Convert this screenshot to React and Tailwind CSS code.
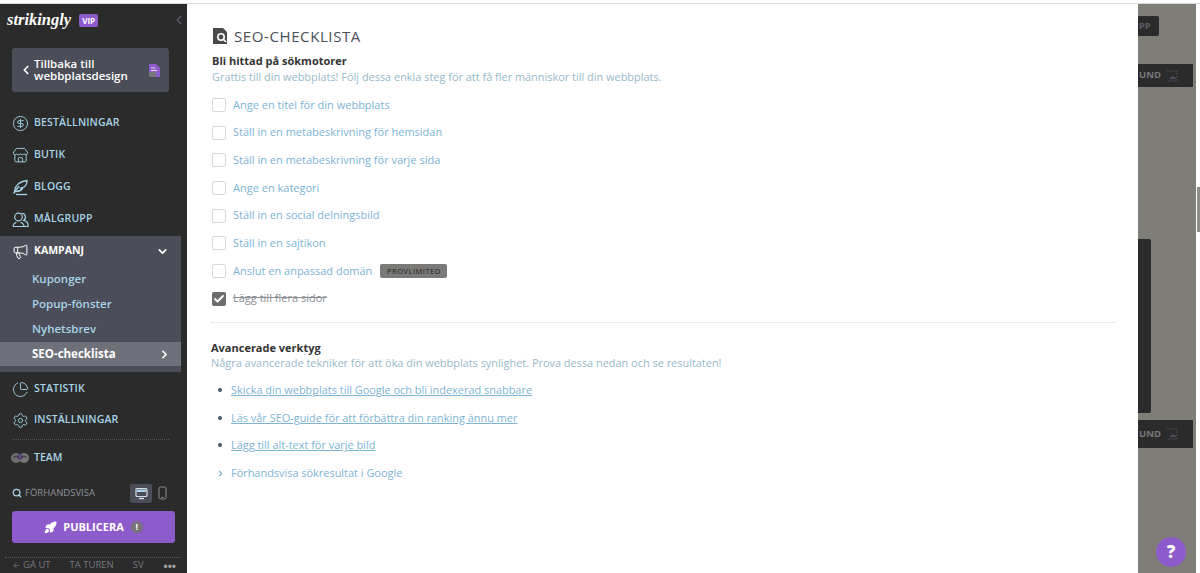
import { ChevronLeft, ChevronDown, ChevronRight, CircleDollarSign, Store, Megaphone, ChartPie, Settings, Search, Rocket, ArrowLeft, Check } from 'lucide-react';

const checks = [
  'Ange en titel för din webbplats',
  'Ställ in en metabeskrivning för hemsidan',
  'Ställ in en metabeskrivning för varje sida',
  'Ange en kategori',
  'Ställ in en social delningsbild',
  'Ställ in en sajtikon',
];

const links = [
  'Skicka din webbplats till Google och bli indexerad snabbare',
  'Läs vår SEO-guide för att förbättra din ranking ännu mer',
  'Lägg till alt-text för varje bild',
];

function QuillIcon({ size, className }) {
  return (
    <svg width={size} height={size} viewBox="0 0 17 17" fill="none" stroke="currentColor" strokeWidth="1.3" className={className}>
      <path d="M2.5 12.5C3 7 7 2.5 15 1.5c0 4-1.5 6-4 7l-2 .5 1.5 .5c-1.5 2-4 3-6.5 3z" />
      <path d="M1.5 14.5 7 7" />
      <path d="M4 15.5h11" />
    </svg>
  );
}

function AudienceIcon({ size, className }) {
  return (
    <svg width={size} height={size} viewBox="0 0 17 17" fill="none" stroke="currentColor" strokeWidth="1.2" className={className}>
      <circle cx="6.5" cy="6" r="3.8" />
      <path d="M1 15.5c0-2.5 1.5-3.5 3.5-4.2M8.5 11.3c2 .7 3.5 1.7 3.5 4.2H1" />
      <path d="M9.5 2.4a3.8 3.8 0 0 1 2.2 7c2.5.6 4.3 2 4.3 4.6v1.5h-4" />
    </svg>
  );
}

function DesktopIcon() {
  return (
    <svg width="13" height="13" viewBox="0 0 13 13" fill="none">
      <rect x="1" y="1.5" width="11" height="8" rx="1" stroke="#d5dde2" strokeWidth="1.2" />
      <rect x="2" y="2.5" width="9" height="2.5" fill="#a9d3e6" />
      <path d="M4 11.5h5" stroke="#d5dde2" strokeWidth="1.4" />
    </svg>
  );
}

function PhoneIcon() {
  return (
    <svg width="9" height="14" viewBox="0 0 9 14" fill="none">
      <rect x="1" y="1" width="7" height="12" rx="1.5" stroke="#8d9098" strokeWidth="1" />
      <path d="M3.5 11.5h2" stroke="#8d9098" strokeWidth="1" />
    </svg>
  );
}

function TeamIcon() {
  return (
    <svg width="18" height="12" viewBox="0 0 18 12" className="shrink-0">
      <circle cx="5" cy="6" r="5" fill="#6e6e72" />
      <circle cx="13" cy="6" r="5" fill="#77777b" />
      <circle cx="9" cy="5" r="3" fill="#5a4a78" />
      <path d="M3 6a2 2 0 0 1 4 0M11 6a2 2 0 0 1 4 0" stroke="#2b2b2b" strokeWidth="1" fill="none" />
    </svg>
  );
}

function FileIcon() {
  return (
    <svg width="11" height="13" viewBox="0 0 11 13" className="ml-auto shrink-0">
      <path d="M0 0h7l4 4v9H0z" fill="#8e5bcd" />
      <path d="M0 8h7v5H0z" fill="#77757a" />
      <path d="M2 4h4M2 6.5h6" stroke="#ffffff" strokeWidth=".8" />
    </svg>
  );
}

function NavItem({ icon: Icon, label, className = '' }) {
  return (
    <div className={`flex h-8 items-center pl-3 ${className}`}>
      <Icon size={17} strokeWidth={1.3} className="shrink-0 text-[#a5d2e6]" />
      <span className="ml-[5px] text-[10.5px] font-semibold tracking-[0.15px] text-[#a9d3e6]">{label}</span>
    </div>
  );
}

function Sidebar() {
  return (
    <aside className="flex h-full w-[187px] shrink-0 flex-col bg-[#2b2b2b] pr-[6px] font-['Open_Sans',sans-serif]">
      <div className="mb-[12px] flex h-[32px] items-center pl-[7px]">
        <span className="font-['Liberation_Serif',serif] text-[16.5px] font-bold italic leading-none text-white">strikingly</span>
        <span className="ml-[8px] rounded-[2px] bg-[#8e5bcd] px-[3px] py-[1px] text-[8px] font-bold leading-[11px] text-white">VIP</span>
        <ChevronLeft size={14} className="ml-auto mr-[-5px] text-[#5d6068]" />
      </div>
      <div className="ml-3 flex h-[44px] w-[157px] items-center rounded-[3px] bg-[#4b4e58] pl-[7px] pr-[9px]">
        <ChevronLeft size={14} strokeWidth={3} className="shrink-0 text-white" />
        <span className="ml-[1px] text-[11.5px] font-semibold leading-[12px] text-white">Tillbaka till<br />webbplatsdesign</span>
        <FileIcon />
      </div>
      <div className="mt-[15px] flex flex-col">
        <NavItem icon={CircleDollarSign} label="BESTÄLLNINGAR" />
        <NavItem icon={Store} label="BUTIK" />
        <NavItem icon={QuillIcon} label="BLOGG" />
        <NavItem icon={AudienceIcon} label="MÅLGRUPP" />
      </div>
      <div className="mt-[1px] flex h-[136px] flex-col bg-[#4b4e58]">
        <div className="flex h-[30px] items-center pl-3 pr-[12px]">
          <Megaphone size={17} strokeWidth={1.4} className="text-white" />
          <span className="ml-[5px] text-[10.5px] font-bold text-white">KAMPANJ</span>
          <ChevronDown size={13} strokeWidth={3} className="ml-auto text-white" />
        </div>
        <div className="flex flex-col text-[11.5px] font-semibold text-[#a9d3e6]">
          <div className="flex h-[25px] items-center pl-8">Kuponger</div>
          <div className="flex h-[25px] items-center pl-8">Popup-fönster</div>
          <div className="flex h-[25px] items-center pl-8">Nyhetsbrev</div>
          <div className="mt-[1px] flex h-[24px] items-center bg-[#6f717a] pl-8 pr-[10px] font-bold text-white">
            SEO-checklista
            <ChevronRight size={13} strokeWidth={3} className="ml-auto" />
          </div>
        </div>
      </div>
      <NavItem icon={ChartPie} label="STATISTIK" className="pt-[2px]" />
      <NavItem icon={Settings} label="INSTÄLLNINGAR" />
      <div className="ml-3 mt-[3px] w-[157px] border-t border-dotted border-[#55575c]" />
      <div className="mt-[1px] flex h-[34px] items-center pl-[11px]">
        <TeamIcon />
        <span className="ml-[5px] text-[10.5px] font-semibold text-[#a9d3e6]">TEAM</span>
      </div>
      <div className="mt-[8px] flex h-[20px] items-center pl-3 pr-[14px]">
        <Search size={10} strokeWidth={3} className="shrink-0 text-[#a9d3e6]" />
        <span className="ml-[3px] text-[9.5px] text-[#8d9098]">FÖRHANDSVISA</span>
        <div className="ml-auto flex h-[19px] w-[22px] items-center justify-center rounded-[2px] bg-[#4b4e58]">
          <DesktopIcon />
        </div>
        <span className="ml-[6px] flex"><PhoneIcon /></span>
      </div>
      <div className="ml-3 mt-[8px] flex h-[32px] w-[163px] items-center justify-center rounded-[3px] bg-[#8e5bcd]">
        <Rocket size={13} strokeWidth={2.5} className="fill-white text-white" />
        <span className="ml-[6px] text-[11px] font-bold text-white">PUBLICERA</span>
        <span className="ml-[7px] flex h-[12px] w-[12px] items-center justify-center rounded-full bg-[#77757a] text-[9px] font-bold text-white">!</span>
      </div>
      <div className="ml-[5px] mt-[14px] border-t border-dotted border-[#55575c]" />
      <div className="flex h-[15px] items-center pl-3 pr-[5px] text-[9.5px] text-[#74777d]">
        <ArrowLeft size={9} className="shrink-0" />
        <span className="ml-[2px]">GÅ UT</span>
        <span className="ml-[19px]">TA TUREN</span>
        <span className="ml-[19px]">SV</span>
        <span className="ml-auto text-[11px] font-bold leading-none text-[#a0a2a6]">•••</span>
      </div>
    </aside>
  );
}

function SeoIcon() {
  return (
    <svg width="16" height="16" viewBox="0 0 16 16" className="shrink-0">
      <path d="M1 0h10l4 4v12H1z" fill="#4a4a4a" />
      <circle cx="9" cy="9" r="3.2" fill="none" stroke="#fff" strokeWidth="1.6" />
      <path d="M11.5 11.5l2.5 2.5" stroke="#fff" strokeWidth="1.6" />
    </svg>
  );
}

function Content() {
  return (
    <main className="h-full w-[951px] shrink-0 bg-white pl-6 pr-6 font-['Open_Sans',sans-serif]">
      <div className="mt-[22px] flex h-5 items-center gap-[6px] pl-[1px]">
        <SeoIcon />
        <h1 className="text-[15px] font-medium leading-5 tracking-[0.6px] text-[#4b4e58]">SEO-CHECKLISTA</h1>
      </div>
      <h2 className="mt-[7px] pl-[1px] text-[11px] font-bold leading-4 text-[#333]">Bli hittad på sökmotorer</h2>
      <p className="pl-[1px] text-[10.93px] leading-4 text-[#97b9c9]">Grattis till din webbplats! Följ dessa enkla steg för att få fler människor till din webbplats.</p>
      <ul className="mt-[6px] flex flex-col pl-[1px] text-[11px] text-[#7db4d4]">
        {checks.map((text) => (
          <li key={text} className="flex h-[27.7px] items-center">
            <span className="h-[14px] w-[14px] rounded-[2px] border border-[#d5d8dc] bg-white" />
            <span className="ml-[7px]">{text}</span>
          </li>
        ))}
        <li className="flex h-[27.7px] items-center">
          <span className="h-[14px] w-[14px] rounded-[2px] border border-[#d5d8dc] bg-white" />
          <span className="ml-[7px]">Anslut en anpassad domän</span>
          <span className="ml-2 w-[67px] rounded-[2px] bg-[#7b7a78] text-center text-[7.5px] leading-[14px] tracking-[0.5px] text-[#222]">PROVLIMITED</span>
        </li>
        <li className="flex h-[27.7px] items-center">
          <span className="flex h-[14px] w-[14px] items-center justify-center rounded-[2px] bg-[#6f6d6b]">
            <Check size={12} strokeWidth={4} className="text-white" />
          </span>
          <span className="ml-[7px] text-[#8a8e92] line-through">Lägg till flera sidor</span>
        </li>
      </ul>
      <div className="mt-[9px] w-[904px] border-t border-dotted border-[#d8d8d8]" />
      <h2 className="mt-[17px] text-[11px] font-bold leading-[15px] text-[#333]">Avancerade verktyg</h2>
      <p className="text-[10.93px] leading-[15px] text-[#97b9c9]">Några avancerade tekniker för att öka din webbplats synlighet. Prova dessa nedan och se resultaten!</p>
      <ul className="mt-[7px] flex flex-col text-[10.93px] text-[#7db4d4]">
        {links.map((text) => (
          <li key={text} className="flex h-[27.6px] items-center">
            <span className="ml-[7px] h-[4px] w-[4px] rounded-full bg-[#4b5a68]" />
            <span className="ml-[9px] underline">{text}</span>
          </li>
        ))}
        <li className="flex h-[27.6px] items-center">
          <ChevronRight size={9} strokeWidth={3} className="ml-[5px]" />
          <span className="ml-[6px]">Förhandsvisa sökresultat i Google</span>
        </li>
      </ul>
    </main>
  );
}

function ImageGlyph() {
  return (
    <svg width="12" height="12" viewBox="0 0 12 12" fill="none" className="ml-[5px] shrink-0">
      <path d="M1 1h10v10H1" stroke="#4b4e58" strokeWidth="1" strokeDasharray="2 1" />
      <path d="M4 8l3-2 3 2v1H4z" fill="#4b4e58" />
    </svg>
  );
}

function PreviewStrip() {
  return (
    <div className="relative h-full w-[58px] shrink-0 bg-[#7f7d78] font-['Open_Sans',sans-serif] text-[#5f6067]">
      <div className="mt-[12px] flex h-[20px] w-[21px] items-center rounded-r-[2px] bg-[#2b2b2b] pl-[1px] text-[9px] font-bold">PP</div>
      <div className="mt-[28px] flex h-[23px] w-[55px] items-center rounded-r-[1px] bg-[#2b2b2b] pl-[1px] text-[9.5px] font-bold text-[#77777c]">
        UND
        <ImageGlyph />
      </div>
      <div className="mt-[152px] h-[174px] w-[13px] rounded-r-[2px] bg-[#2b2b2b]" />
      <div className="mt-[7px] flex h-[28px] w-[55px] items-center rounded-r-[1px] bg-[#2b2b2b] pl-[1px] text-[9.5px] font-bold text-[#77777c]">
        UND
        <ImageGlyph />
      </div>
      {/* help button floats over the page */}
      <div className="absolute bottom-[6px] left-[18px] flex h-[30px] w-[30px] items-center justify-center rounded-full bg-[#8e5bcd] text-[17px] font-extrabold text-white">?</div>
    </div>
  );
}

export default function App() {
  return (
    <div className="flex h-[573px] w-[1200px] flex-col overflow-hidden bg-white">
      <div className="h-[4px] shrink-0 border-b border-[#d9d9d9] bg-white" />
      <div className="flex h-[569px]">
        <Sidebar />
        <Content />
        <PreviewStrip />
        <div className="flex flex-1 flex-col bg-white">
          <div className="mt-[183px] h-[45px] w-[3px] self-end bg-[#8d8d8a]" />
        </div>
      </div>
    </div>
  );
}
